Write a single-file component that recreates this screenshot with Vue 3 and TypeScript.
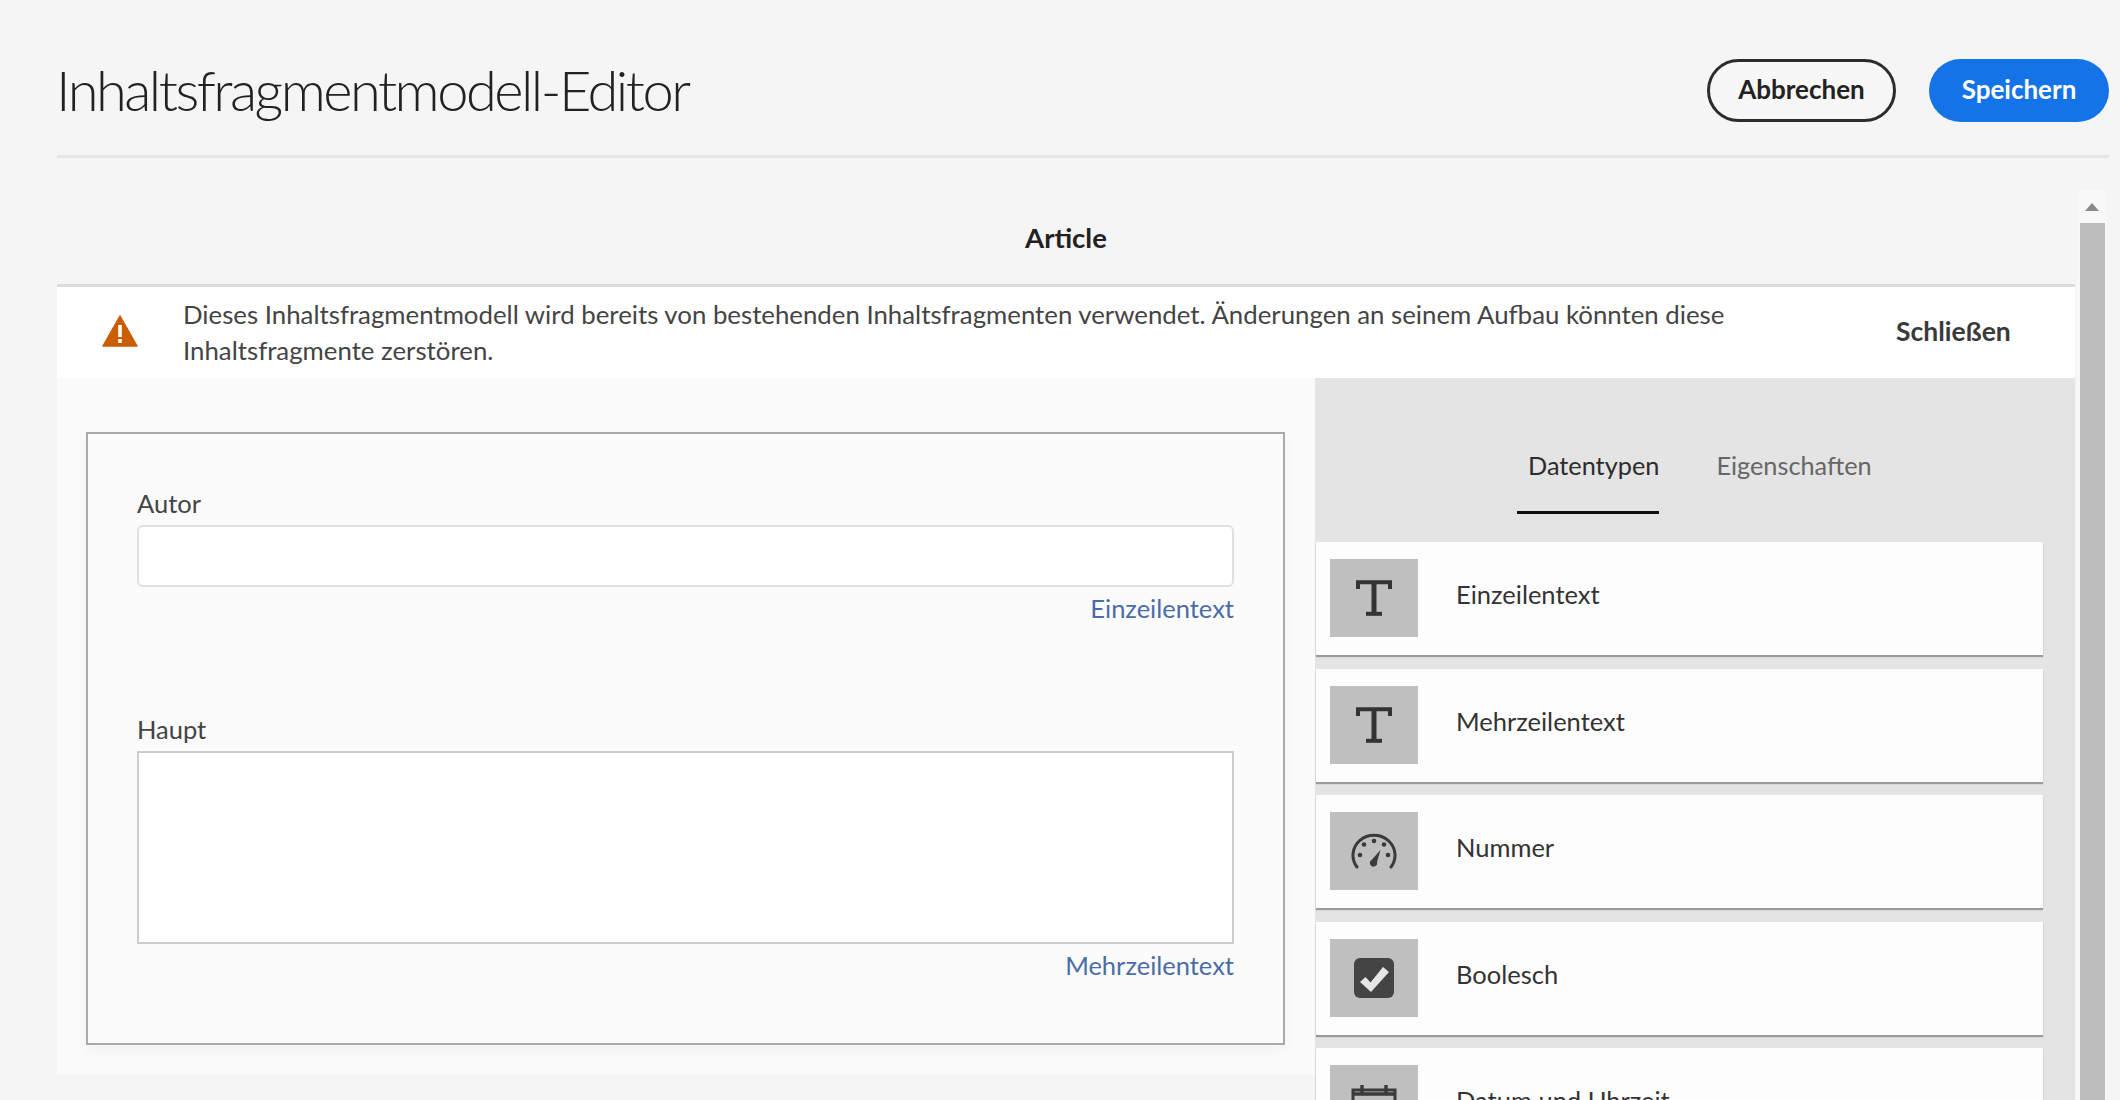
<script setup lang="ts">
type Kind = 'text' | 'gauge' | 'check' | 'calendar'
interface DataType { label: string; kind: Kind }
const dataTypes: DataType[] = [
  { label: 'Einzeilentext', kind: 'text' },
  { label: 'Mehrzeilentext', kind: 'text' },
  { label: 'Nummer', kind: 'gauge' },
  { label: 'Boolesch', kind: 'check' },
  { label: 'Datum und Uhrzeit', kind: 'calendar' },
]
</script>

<template>
  <div class="page">
    <header class="topbar">
      <h1 class="title">Inhaltsfragmentmodell-Editor</h1>
      <div class="actions">
        <button class="btn btn-outline" type="button">Abbrechen</button>
        <button class="btn btn-primary" type="button">Speichern</button>
      </div>
    </header>

    <div class="main">
      <div class="content">
        <div class="model-name">Article</div>
        <div class="banner">
          <svg class="warn" viewBox="0 0 36 32" width="36" height="32" aria-hidden="true">
            <path d="M18 1 L35 31 L1 31 Z" fill="#c95f00" stroke="#c95f00" stroke-width="1.5" stroke-linejoin="round" />
            <rect x="16.2" y="10" width="3.6" height="12" fill="#fff" />
            <rect x="16.2" y="24" width="3.6" height="4" fill="#fff" />
          </svg>
          <p class="banner-text">Dieses Inhaltsfragmentmodell wird bereits von bestehenden Inhaltsfragmenten verwendet. Änderungen an seinem Aufbau könnten diese Inhaltsfragmente zerstören.</p>
          <span class="close">Schließen</span>
        </div>

        <div class="workspace">
          <section class="canvas">
            <div class="form-box">
              <div class="field field-single">
                <label class="field-label">Autor</label>
                <div class="input"></div>
                <a class="field-type">Einzeilentext</a>
              </div>
              <div class="field field-multi">
                <label class="field-label">Haupt</label>
                <div class="textarea"></div>
                <a class="field-type">Mehrzeilentext</a>
              </div>
            </div>
          </section>

          <aside class="panel">
            <nav class="tabs">
              <span class="tab tab-active">Datentypen</span>
              <span class="tab">Eigenschaften</span>
            </nav>
            <ul class="type-list">
              <li v-for="item in dataTypes" :key="item.label" class="type-card">
                <span class="tile">
                  <svg v-if="item.kind === 'text'" viewBox="0 0 36 36" width="36" height="36" aria-hidden="true">
                    <path d="M2 9 V2.2 H34 V9" fill="none" stroke="#333" stroke-width="4" />
                    <path d="M18 2 V34" fill="none" stroke="#333" stroke-width="5" />
                    <path d="M10 33.8 H26" fill="none" stroke="#333" stroke-width="4" />
                  </svg>
                  <svg v-else-if="item.kind === 'gauge'" viewBox="0 0 46 36" width="46" height="36" aria-hidden="true">
                    <path d="M6 34 A21 20 0 1 1 40 34" fill="none" stroke="#3a3a3a" stroke-width="3" stroke-linecap="round" />
                    <circle cx="9" cy="22" r="2.3" fill="#3a3a3a" />
                    <circle cx="13" cy="11.5" r="2.3" fill="#3a3a3a" />
                    <circle cx="23" cy="8" r="2.3" fill="#3a3a3a" />
                    <circle cx="33" cy="11.5" r="2.3" fill="#3a3a3a" />
                    <circle cx="37" cy="22" r="2.3" fill="#3a3a3a" />
                    <path d="M29.5 17 L26 29 A3.6 3.6 0 1 1 20.5 27 Z" fill="#3a3a3a" />
                  </svg>
                  <svg v-else-if="item.kind === 'check'" viewBox="0 0 40 40" width="40" height="40" aria-hidden="true">
                    <rect width="40" height="40" rx="6" fill="#444" />
                    <path d="M6 24 L11.5 19 L16.5 24.5 L29 9 L35 14 L17 34 Z" fill="#e6e6e6" />
                  </svg>
                  <svg v-else viewBox="0 0 46 40" width="46" height="40" aria-hidden="true">
                    <rect x="2" y="6" width="42" height="32" fill="none" stroke="#3a3a3a" stroke-width="3" />
                    <path d="M2 10 H44 M11 1 V9 M35 1 V9" stroke="#3a3a3a" stroke-width="3.4" />
                    <path d="M10 19 H36" stroke="#3a3a3a" stroke-width="3.4" stroke-dasharray="3.4 3.2" />
                  </svg>
                </span>
                <span class="type-label">{{ item.label }}</span>
              </li>
            </ul>
          </aside>
        </div>
      </div>

      <div class="scrollbar">
        <div class="scroll-up"><span class="arrow"></span></div>
        <div class="scroll-thumb"></div>
      </div>
    </div>
  </div>
</template>

<style scoped>
.page {
  height: 1100px;
  overflow: hidden;
  box-sizing: border-box;
  padding-left: 57px;
  padding-right: 11px;
  background: #f5f5f5;
  font-family: Lato, "Open Sans", sans-serif;
  color: #2c2c2c;
}
.topbar {
  box-sizing: border-box;
  height: 158px;
  padding: 58px 0 33px;
  display: flex;
  align-items: center;
  justify-content: space-between;
  border-bottom: 3px solid #e6e6e6;
}
.title {
  margin: 0 0 0 -1px;
  font-size: 56px;
  font-weight: 300;
  line-height: 64px;
  letter-spacing: -2.5px;
  color: #222;
}
.actions {
  display: flex;
  gap: 33px;
}
.btn {
  height: 63px;
  border-radius: 32px;
  font-family: inherit;
  font-size: 26px;
  font-weight: 700;
  padding: 0 0 3px;
  box-sizing: border-box;
}
.btn-outline {
  width: 189px;
  background: #f7f7f7;
  border: 3px solid #2c2c2c;
  color: #222;
}
.btn-primary {
  width: 180px;
  background: #1473e6;
  border: 0;
  color: #fff;
}
.main {
  display: flex;
  margin-top: 32px;
  height: 910px;
  gap: 2px;
}
.content {
  width: 2018px;
  display: flex;
  flex-direction: column;
}
.model-name {
  box-sizing: border-box;
  height: 97px;
  padding-top: 1px;
  display: flex;
  align-items: center;
  justify-content: center;
  font-size: 27.5px;
  font-weight: 700;
  color: #222;
  border-bottom: 3px solid #dcdcdc;
}
.banner {
  box-sizing: border-box;
  height: 91px;
  background: #fff;
  display: flex;
  align-items: center;
  padding-left: 45px;
}
.warn {
  flex: none;
  margin-top: -3px;
}
.banner-text {
  margin: 0 0 0 45px;
  width: 1570px;
  font-size: 25.8px;
  line-height: 35.5px;
  color: #444;
}
.close {
  margin-left: 143px;
  margin-top: -4px;
  font-size: 26.5px;
  font-weight: 700;
  color: #3a3a3a;
  white-space: nowrap;
}
.workspace {
  display: flex;
  flex: 1;
  min-height: 0;
}
.canvas {
  width: 1258px;
  height: 697px;
  box-sizing: border-box;
  padding: 54px 30px 0 29px;
  background: #fafafa;
  flex: none;
}
.form-box {
  box-sizing: border-box;
  height: 613px;
  background: #fbfbfb;
  border: 2px solid #aaa;
  box-shadow: 0 6px 14px rgba(0, 0, 0, 0.03);
  padding: 52px 49px 0 49px;
}
.field {
  display: flex;
  flex-direction: column;
}
.field-single {
  height: 226px;
}
.field-label {
  font-size: 25.5px;
  line-height: 34px;
  color: #444;
  margin-bottom: 5px;
}
.input {
  height: 62px;
  box-sizing: border-box;
  background: #fff;
  border: 2px solid #e0e0e0;
  border-radius: 6px;
}
.textarea {
  height: 193px;
  box-sizing: border-box;
  background: #fff;
  border: 2px solid #ccc;
}
.field-type {
  align-self: flex-end;
  font-size: 25.5px;
  line-height: 34px;
  margin-top: 4px;
  color: #4b6ca8;
}
.panel {
  flex: 1;
  background: #e4e4e4;
  min-width: 0;
  overflow: hidden;
}
.tabs {
  display: flex;
  gap: 57px;
  padding: 71px 0 0 202px;
  margin-bottom: 28px;
}
.tab {
  font-size: 25.3px;
  line-height: 32px;
  height: 65px;
  box-sizing: border-box;
  color: #666;
}
.tab-active {
  padding-left: 11px;
  color: #2c2c2c;
  border-bottom: 3px solid #111;
}
.type-list {
  list-style: none;
  margin: 0;
  padding: 0 32px 0 1px;
}
.type-card {
  box-sizing: border-box;
  height: 113px;
  margin-bottom: 13.5px;
  padding: 17px 0 0 14px;
  display: flex;
  align-items: flex-start;
  background: #fdfdfd;
  box-shadow: 0 2px 1px #9a9a9a;
}
.tile {
  width: 88px;
  height: 78px;
  flex: none;
  display: flex;
  align-items: center;
  justify-content: center;
  background: #bfbfbf;
}
.type-label {
  margin: 18px 0 0 38px;
  font-size: 25.5px;
  line-height: 34px;
  color: #333;
}
.scrollbar {
  width: 30px;
  flex: none;
  display: flex;
  flex-direction: column;
  align-items: center;
  background: #f8f8f8;
}
.scroll-up {
  height: 33px;
  width: 100%;
  display: flex;
  align-items: center;
  justify-content: center;
}
.arrow {
  width: 0;
  height: 0;
  border-left: 7px solid transparent;
  border-right: 7px solid transparent;
  border-bottom: 8px solid #8a8a8a;
}
.scroll-thumb {
  flex: 1;
  width: 25px;
  background: #bdbdbd;
}
</style>

<style>
html, body {
  margin: 0;
  background: #f5f5f5;
}
</style>
